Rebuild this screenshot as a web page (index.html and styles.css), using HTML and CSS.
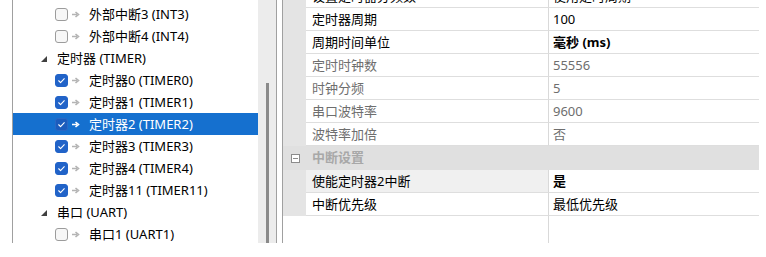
FILE: index.html
```html
<!DOCTYPE html>
<html lang="zh-CN">
<head>
<meta charset="utf-8">
<title>定时器配置</title>
<link rel="stylesheet" href="styles.css">
</head>
<body>
<div class="app">
  <div class="tree-panel">
    <div class="tree">
      <div class="row child"><span class="cb"></span><svg class="arr" viewBox="0 0 8 7"><path d="M0 3.5H5M3.5 1L6.5 3.5L3.5 6" /></svg><span class="label">外部中断3 (INT3)</span></div>
      <div class="row child"><span class="cb"></span><svg class="arr" viewBox="0 0 8 7"><path d="M0 3.5H5M3.5 1L6.5 3.5L3.5 6" /></svg><span class="label">外部中断4 (INT4)</span></div>
      <div class="row group"><svg class="exp" viewBox="0 0 6 6"><polygon points="6,0 6,6 0,6" /></svg><span class="label">定时器 (TIMER)</span></div>
      <div class="row child"><span class="cb on"><svg viewBox="0 0 13 13"><path d="M3.2 6.8L5.4 9L9.8 4.4" /></svg></span><svg class="arr" viewBox="0 0 8 7"><path d="M0 3.5H5M3.5 1L6.5 3.5L3.5 6" /></svg><span class="label">定时器0 (TIMER0)</span></div>
      <div class="row child"><span class="cb on"><svg viewBox="0 0 13 13"><path d="M3.2 6.8L5.4 9L9.8 4.4" /></svg></span><svg class="arr" viewBox="0 0 8 7"><path d="M0 3.5H5M3.5 1L6.5 3.5L3.5 6" /></svg><span class="label">定时器1 (TIMER1)</span></div>
      <div class="row child selected"><span class="cb on"><svg viewBox="0 0 13 13"><path d="M3.2 6.8L5.4 9L9.8 4.4" /></svg></span><svg class="arr" viewBox="0 0 8 7"><path d="M0 3.5H5M3.5 1L6.5 3.5L3.5 6" /></svg><span class="label">定时器2 (TIMER2)</span></div>
      <div class="row child"><span class="cb on"><svg viewBox="0 0 13 13"><path d="M3.2 6.8L5.4 9L9.8 4.4" /></svg></span><svg class="arr" viewBox="0 0 8 7"><path d="M0 3.5H5M3.5 1L6.5 3.5L3.5 6" /></svg><span class="label">定时器3 (TIMER3)</span></div>
      <div class="row child"><span class="cb on"><svg viewBox="0 0 13 13"><path d="M3.2 6.8L5.4 9L9.8 4.4" /></svg></span><svg class="arr" viewBox="0 0 8 7"><path d="M0 3.5H5M3.5 1L6.5 3.5L3.5 6" /></svg><span class="label">定时器4 (TIMER4)</span></div>
      <div class="row child"><span class="cb on"><svg viewBox="0 0 13 13"><path d="M3.2 6.8L5.4 9L9.8 4.4" /></svg></span><svg class="arr" viewBox="0 0 8 7"><path d="M0 3.5H5M3.5 1L6.5 3.5L3.5 6" /></svg><span class="label">定时器11 (TIMER11)</span></div>
      <div class="row group"><svg class="exp" viewBox="0 0 6 6"><polygon points="6,0 6,6 0,6" /></svg><span class="label">串口 (UART)</span></div>
      <div class="row child"><span class="cb"></span><svg class="arr" viewBox="0 0 8 7"><path d="M0 3.5H5M3.5 1L6.5 3.5L3.5 6" /></svg><span class="label">串口1 (UART1)</span></div>
    </div>
    <div class="vscroll"><div class="thumb"></div></div>
  </div>
  <div class="splitter"></div>
  <div class="grid-panel">
    <div class="prow partial"><div class="pm"></div><div class="pn">设置定时器分频数</div><div class="pv">使用定时周期</div></div>
    <div class="prow"><div class="pm"></div><div class="pn">定时器周期</div><div class="pv">100</div></div>
    <div class="prow"><div class="pm"></div><div class="pn">周期时间单位</div><div class="pv bold">毫秒 (ms)</div></div>
    <div class="prow ro"><div class="pm"></div><div class="pn">定时时钟数</div><div class="pv">55556</div></div>
    <div class="prow ro"><div class="pm"></div><div class="pn">时钟分频</div><div class="pv">5</div></div>
    <div class="prow ro"><div class="pm"></div><div class="pn">串口波特率</div><div class="pv">9600</div></div>
    <div class="prow ro"><div class="pm"></div><div class="pn">波特率加倍</div><div class="pv">否</div></div>
    <div class="pcat"><div class="pm"><svg class="collapse" viewBox="0 0 9 9"><rect x="0.5" y="0.5" width="8" height="8" /><path d="M2 4.5H7" /></svg></div><div class="cat-label">中断设置</div></div>
    <div class="prow sel"><div class="pm"></div><div class="pn">使能定时器2中断</div><div class="pv bold">是</div></div>
    <div class="prow"><div class="pm"></div><div class="pn">中断优先级</div><div class="pv">最低优先级</div></div>
    <div class="pfill"><div class="fm"></div><div class="fn"></div><div class="fv"></div></div>
  </div>
</div>
</body>
</html>
```

FILE: styles.css
```css
html, body {
  margin: 0;
  padding: 0;
  background: #ffffff;
}

body {
  width: 766px;
  height: 257px;
  overflow: hidden;
  font-family: "Noto Sans", "Noto Sans CJK SC", sans-serif;
  font-size: 13px;
  color: #000;
}

.app {
  display: flex;
  height: 243px;
  padding-left: 12px;
}

/* ---------- tree ---------- */
.tree-panel {
  display: flex;
  width: 263px;
  border-left: 1px solid #a0a0a0;
  border-right: 1px solid #a0a0a0;
  background: #fff;
}

.tree {
  flex: 1;
  padding-top: 3px;
  overflow: hidden;
}

.row {
  display: flex;
  align-items: center;
  height: 22px;
  white-space: nowrap;
}

.row.group {
  padding-left: 28px;
}

.row.child {
  padding-left: 42px;
}

.row.selected {
  background: #1570cf;
  color: #fff;
}

.exp {
  width: 6px;
  height: 6px;
  fill: #404040;
  margin-right: 10px;
  margin-top: 1px;
}

.cb {
  width: 11px;
  height: 11px;
  border: 1px solid #9c9c9c;
  border-radius: 3px;
  background: #f7f7f7;
  display: flex;
  align-items: center;
  justify-content: center;
  flex: none;
}

.cb.on {
  background: #2163c8;
  border-color: #2163c8;
}

.selected .cb.on {
  background: #1b5cbd;
  border-color: #2a68c4;
}

.cb svg {
  width: 13px;
  height: 13px;
  fill: none;
  stroke: #fff;
  stroke-width: 1.3;
  stroke-linecap: round;
  stroke-linejoin: round;
}

.arr {
  width: 8px;
  height: 7px;
  margin-left: 4px;
  margin-right: 9px;
  fill: none;
  stroke: #b4b4b4;
  stroke-width: 1.6;
  flex: none;
}

.selected .arr {
  stroke: #ffffff;
}

.label {
  line-height: 22px;
}

.vscroll {
  width: 18px;
  background: #ececec;
  display: flex;
  justify-content: center;
}

.thumb {
  width: 3px;
  margin-top: 83px;
  background: #8a8a8a;
}

.splitter {
  width: 5px;
}

/* ---------- property grid ---------- */
.grid-panel {
  width: 476px;
  border-left: 1px solid #a0a0a0;
  display: flex;
  flex-direction: column;
  overflow: hidden;
}

.prow {
  display: flex;
  height: 23px;
  flex: none;
}

.prow.partial {
  margin-top: -15px;
}

.pm {
  width: 23px;
  flex: none;
  background: #e4e4e4;
  display: flex;
  align-items: center;
  justify-content: center;
}

.pn {
  width: 236px;
  flex: none;
  padding-left: 6px;
  border-right: 1px solid #d9d9d9;
  border-bottom: 1px solid #dedede;
  line-height: 22px;
  white-space: nowrap;
  overflow: hidden;
}

.pv {
  flex: 1;
  padding-left: 4px;
  border-bottom: 1px solid #dedede;
  line-height: 22px;
  white-space: nowrap;
  overflow: hidden;
}

.bold {
  font-weight: bold;
}

.ro .pn,
.ro .pv {
  color: #6e6e6e;
}

.sel .pn {
  background: #f0f0f0;
}

.pcat {
  display: flex;
  height: 24px;
  flex: none;
  background: #e0e0e0;
}

.pcat .pm {
  background: transparent;
}

.collapse {
  width: 9px;
  height: 9px;
  fill: #fff;
  stroke: #8c8c8c;
  stroke-width: 1;
  margin-left: 2px;
}

.cat-label {
  padding-left: 6px;
  line-height: 23px;
  font-weight: bold;
  color: #a8a8a8;
}

.pfill {
  flex: 1;
  display: flex;
}

.fm {
  width: 23px;
}

.fn {
  width: 242px;
  border-right: 1px solid #d9d9d9;
}

.fv {
  flex: 1;
}
```
